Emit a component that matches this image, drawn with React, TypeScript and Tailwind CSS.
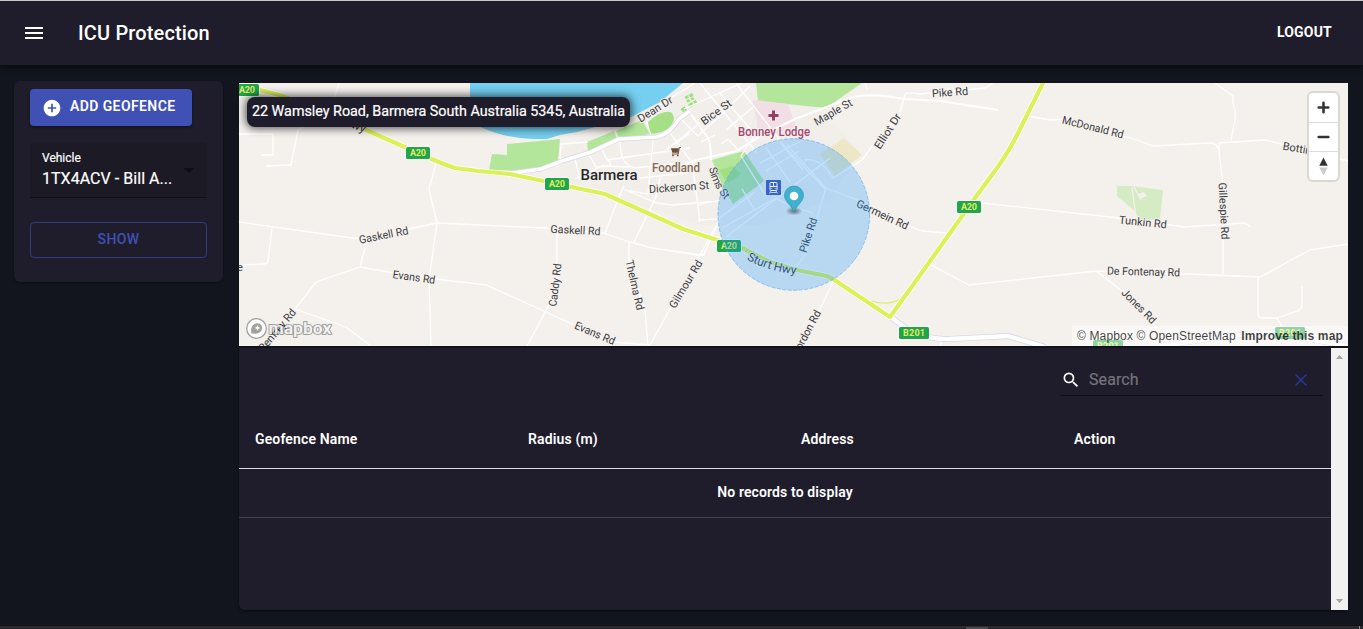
import type { ReactNode } from "react";
import { MdMenu, MdAddCircle, MdSearch, MdArrowDropDown } from "react-icons/md";

type Label = {
  text: string;
  x: number;
  y: number;
  turn?: number;
  len: number;
  size?: number;
  color?: string;
  weight?: number;
};

const LABELS: Label[] = [
  { text: "Gaskell Rd", x: 383.5, y: 235, turn: -11, len: 50 },
  { text: "Evans Rd", x: 414, y: 277, turn: 8, len: 43 },
  { text: "Penfrey Rd", x: 277, y: 330, turn: -50, len: 52 },
  { text: "Gaskell Rd", x: 575.5, y: 230, turn: 3, len: 50 },
  { text: "Caddy Rd", x: 555, y: 285, turn: -83, len: 43 },
  { text: "Thelma Rd", x: 635, y: 285, turn: 77, len: 51 },
  { text: "Evans Rd", x: 595, y: 333, turn: 23, len: 43 },
  { text: "Gilmour Rd", x: 685.5, y: 284, turn: -59, len: 54 },
  { text: "Dean Dr", x: 655, y: 109, turn: -32, len: 39 },
  { text: "Foodland", x: 676, y: 168, len: 48, size: 12, color: "#86695a", weight: 500 },
  { text: "Barmera", x: 609, y: 175, len: 57, size: 15, color: "#26262b", weight: 500 },
  { text: "Dickerson St", x: 679, y: 187, turn: -4, len: 60 },
  { text: "Bice St", x: 716, y: 112, turn: -36, len: 35 },
  { text: "Maple St", x: 833, y: 112, turn: -30, len: 42 },
  { text: "Elliot Dr", x: 887.5, y: 131, turn: -57, len: 40 },
  { text: "Bonney Lodge", x: 774, y: 132, len: 72, size: 12, color: "#a5476f", weight: 500 },
  { text: "Pike Rd", x: 950, y: 92, turn: -4, len: 36 },
  { text: "Germein Rd", x: 882.5, y: 214.5, turn: 25, len: 56 },
  { text: "Gordon Rd", x: 806, y: 333, turn: -62, len: 50 },
  { text: "McDonald Rd", x: 1093, y: 127, turn: 14, len: 63 },
  { text: "Tunkin Rd", x: 1143, y: 222, turn: 6, len: 48 },
  { text: "De Fontenay Rd", x: 1143.5, y: 271.5, turn: 1.5, len: 73 },
  { text: "Jones Rd", x: 1139, y: 306, turn: 45, len: 44 },
  { text: "Gillespie Rd", x: 1224, y: 211, turn: 87, len: 57 },
  { text: "Botting Rd", x: 1308, y: 150, turn: 10, len: 51 },
  { text: "Pike Rd", x: 808, y: 235, turn: -72, len: 36 },
];

const MINOR_ROADS = [
  // west
  "M339 83 L330 112 L298 130 L291 165 L266 166",
  "M239 134 H273 V155 H261",
  "M239 222 L360 239 L437 223 L545 228 L603 233 L630 242 L652 248 L700 255 L705 254",
  "M272 227 L268 262 Q267 264 263 264 L239 265",
  "M436 164 L429 189 L437 223 L429 279 L431 346",
  "M367 240 L360 267 L316 282 L295 309 L346 327 L371 346",
  "M360 267 L410 276 L486 285 L546 312 L612 342 L650 345 L720 219",
  "M557 230 V290 L527 346",
  "M629 242 V262 L645 310 L648 346",
  "M621 192 L605 233",
  "M657 195 L634 242",
  "M295 309 L262 346",
  // town
  "M560 161 L561 144 L588 142 M575 159 L580 179 M588 153 L596 167 L611 166 L608 158 M602 149 L607 160 L690 148 M620 142 Q620 165 635 168 L681 163",
  "M653 140 L648 194 L625 190 L657 203 L672 205 L720 201 M624 186 L618 200",
  "M575 179 L602 166 L630 167 M640 178 L688 173 M660 178 L655 200",
  "M646 121 L651 135 M670 133 L690 160 M666 150 L700 123",
  "M674 145 L690 133 M682 120 L698 136 L724 112 L750 86 M700 83 L757 153",
  "M719 92 L757 137 M736 83 L785 147 L826 190 M752 108 L726 130",
  "M640 117 L695 83 M684 109 L742 83",
  "M701 142 L715 135 M721 144 L728 139 L738 150",
  "M692 160 L700 222 M697 206 L708 202 M698 220 L718 219 L755 192",
  "M758 130 L741 156 L766 196 M766 148 L790 182 M780 142 L803 170 M760 163 L806 138 M766 171 L799 151",
  "M742 189 L754 209 M722 228 L776 198 L788 205 L813 213 M726 237 L830 158",
  "M787 145 L826 188 L806 253 M806 253 L794 270 M804 160 Q815 158 826 168 L833 178 L862 160 L876 141",
  "M826 188 L860 201 L906 225 L922 231 L946 233",
  "M680 252 L703 256 L717 225",
  "M834 280 L818 313 L800 346",
  // east
  "M876 142 L899 116 L905 94 Q907 92 920 94 L965 90 L985 88 L993 83 M865 83 L867 89",
  "M1028 116 L1050 120 L1068 119 L1140 141 L1153 146 L1210 143 Q1217 143 1219 150 L1223 185 L1223 274",
  "M1215 83 L1233 96 Q1232 102 1235 110 L1235 120 L1231 140",
  "M1219 150 V143 L1265 140 L1348 161",
  "M982 203 L1110 217 L1185 227 L1243 223 Q1249 224 1250 227",
  "M931 265 L969 285 L1096 271 L1190 274 L1260 277 L1310 250 L1348 244",
  "M1096 271 L1130 297 L1162 335",
  "M1258 277 V313 Q1258 318 1262 318 H1277 L1297 311 Q1302 310 1302 304 V286 M1277 318 L1285 332 L1340 346",
  "M940 346 L944 335",
];

const TOWN_STREETS =
  "M690 113 L708 138 Q711 146 711 160 M680 166 L696 160 L737 151 L757 138 L795 119 L850 98 Q868 92 905 99 L940 101 L998 110";

const SCENIC =
  "M505 174 L541 169 L562 161 L591 152 L619 139 L657 137 Q667 134 673 127 L680 118 L690 111";

const SOUTH_ROAD =
  "M891 317 L908 330 Q930 340 950 339 L1008 336 L1045 347 M1160 346 L1230 336 L1270 332 L1348 346";

const HIGHWAY =
  "M239 86 L260 90 L283 96 L366 130 L425 156 Q445 165 455 168 L478 171 L510 174 L605 194 L683 229 L742 248 L770 262 L797 270 L827 276 L833 279 L890 317 L928 264 L975 198 L997 168 Q1010 150 1018 133 L1043 83 L1048 74";

const SHIELDS = [
  { text: "A20", x: 247, y: 90 },
  { text: "A20", x: 418, y: 153 },
  { text: "A20", x: 557, y: 184 },
  { text: "A20", x: 729, y: 246 },
  { text: "A20", x: 969, y: 207 },
  { text: "B201", x: 914, y: 333 },
  { text: "B201", x: 1108, y: 346 },
  { text: "B201", x: 1290, y: 333 },
];

function RoadLabel({ text, x, y, turn = 0, len, size = 11, color = "#3c3c41", weight = 400 }: Label) {
  return (
    <text
      transform={`translate(${x} ${y}) rotate(${turn})`}
      textAnchor="middle"
      dy="0.36em"
      textLength={len}
      lengthAdjust="spacingAndGlyphs"
      fontSize={size}
      fontWeight={weight}
      fill={color}
      stroke="#f4f1ed"
      strokeWidth="2"
      strokeLinejoin="round"
      paintOrder="stroke"
    >
      {text}
    </text>
  );
}

function Shield({ text, x, y }: { text: string; x: number; y: number }) {
  const w = text.length === 4 ? 30 : 24;
  return (
    <g>
      <rect x={x - w / 2 - 0.7} y={y - 6.7} width={w + 1.4} height="13.4" rx="2.2" fill="#fff" />
      <rect x={x - w / 2} y={y - 6} width={w} height="12" rx="1.6" fill="#1fa64b" />
      <text
        x={x}
        y={y + 3.2}
        textAnchor="middle"
        textLength={w - 8}
        fontSize="9"
        fontWeight="700"
        fill="#e3e965"
      >
        {text}
      </text>
    </g>
  );
}

function MapCanvas() {
  return (
    <svg viewBox="239 83 1109 263" className="block h-[263px] w-full font-['Roboto',sans-serif]">
      <rect x="239" y="83" width="1109" height="263" fill="#f4f1ed" />
      <path d="M560 150 L610 125 L690 83 H790 L860 150 L830 200 L760 225 L700 225 L560 180Z" fill="#f2eeea" />
      <path
        d="M470 83 V110 L480 127 L493 132 Q510 138 533 139 L547 139 L560 135 L577 132 L631 117 L660 102 L683 83Z"
        fill="#75cff0"
      />
      <path d="M492 154 L507 155 V144 L560 139 L558 161 L538 171 L489 170Z" fill="#b3e59b" />
      <path d="M587 142 L614 131 L617 139 L588 151Z M616 131 L642 120 L650 134 L619 139Z" fill="#b3e59b" />
      <path d="M648 122 Q664 108 672 113 Q677 120 669 128 Q664 133 650 134Z" fill="#a5e084" />
      <path d="M756 83 H862 L826 108 L758 101Z" fill="#b3e59b" />
      <path d="M712 160 L744 151 L764 181 L733 204 L722 185Z" fill="#b3e59b" />
      <path d="M719 170 L733 166 L741 174 L728 183Z" fill="#9fdf7f" />
      <g fill="#9fdf7f">
        <path d="M684.500 97 l3-2 l1.500 2.500 l-3 1.800z M688.500 95 l3.500-2 l1.500 3 l-3 1.500z M686 100.500 l3-1.500 l1.500 2.500 l-3 1z M690.500 98.500 l2.500-1.500 l1.500 2 l-2.500 1.500z" />
        <path d="M688 104.500 l4-2.500 l2 3 l-3.500 2.500z M693 101.500 l2.500-1.500 l2 2.500 l-2.500 2z" />
        <path d="M680.500 109 l4-2.800 l2.500 3.500 l-4 2.500z" />
      </g>
      <path d="M752 101 L757 100 L788 104 L796 126 L783 134 H757 V120Z" fill="#f2dfe5" />
      <path d="M820 154 L844 138 L862 155 L835 176Z" fill="#eee7c5" />
      <path d="M1117 186 H1131 L1163 190 L1160 221 L1138 218 L1135 211 L1117 196Z" fill="#d4ebc4" />
      <path d="M1132 187 L1136 218 M1134 187 L1141 200" stroke="#f4f1ed" strokeWidth="1.3" fill="none" />
      <path d="M1138 194 l6-2 l3 4 l-7 3z" fill="#f4f1ed" />

      <g fill="none" stroke="#fff" strokeWidth="1.3" strokeLinejoin="round">
        {MINOR_ROADS.map((d) => (
          <path key={d} d={d} />
        ))}
        <path d={TOWN_STREETS} strokeWidth="2.1" />
      </g>

      <g fill="none" strokeLinejoin="round">
        <path d={SCENIC} stroke="#d5d8e8" strokeWidth="5" />
        <path d={SCENIC} stroke="#fff" strokeWidth="3.6" />
        <path d={SOUTH_ROAD} stroke="#d5d8e8" strokeWidth="6" />
        <path d={SOUTH_ROAD} stroke="#fff" strokeWidth="4.4" />
        <path d="M871 301 Q888 306 900 299" stroke="#dcef5d" strokeWidth="1.2" />
        <path d={HIGHWAY} stroke="#fff" strokeWidth="5.6" />
        <path d={HIGHWAY} stroke="#dbf059" strokeWidth="4.2" />
      </g>

      {/* shop */}
      <path d="M671 148.300 H679 L678.200 152.800 H672.300Z" fill="#6b4f3e" />
      <path d="M681 147.500 H679.400 L678.200 154 H672" fill="none" stroke="#6b4f3e" strokeWidth="0.9" />
      <circle cx="673" cy="155.400" r="0.9" fill="#6b4f3e" />
      <circle cx="677.800" cy="155.400" r="0.9" fill="#6b4f3e" />
      {/* hospital */}
      <path d="M773.500 110.500 V120.500 M768.500 115.500 H778.500" stroke="#fff" strokeWidth="5" opacity="0.7" />
      <path d="M773.500 110.500 V120.500 M768.500 115.500 H778.500" stroke="#963f63" strokeWidth="3" />

      {LABELS.map((l) => (
        <RoadLabel key={`${l.text}${l.x}`} {...l} />
      ))}

      <path id="sims" d="M709 168 Q712 186 727 202" fill="none" />
      <text fontSize="11" fill="#3c3c41" stroke="#f4f1ed" strokeWidth="1" paintOrder="stroke">
        <textPath href="#sims" textLength="36">
          Sims St
        </textPath>
      </text>
      <path id="sturt" d="M746.500 259.500 Q768 271 797 274.500" fill="none" />
      <text fontSize="12" fill="#3c3c41" stroke="#f4f1ed" strokeWidth="1.2" paintOrder="stroke">
        <textPath href="#sturt" textLength="52">
          Sturt Hwy
        </textPath>
      </text>
      <text
        transform="translate(364 133) rotate(23)"
        textAnchor="end"
        fontSize="12"
        fill="#3c3c41"
        stroke="#f4f1ed"
        strokeWidth="1.5"
        paintOrder="stroke"
      >
        Sturt Hwy
      </text>
      <text x="237" y="270.500" fontSize="11" fill="#3c3c41">
        e
      </text>

      {SHIELDS.map((s) => (
        <Shield key={`${s.text}${s.x}`} {...s} />
      ))}

      {/* geofence radius */}
      <circle
        cx="793.8"
        cy="214.5"
        r="75.8"
        fill="#1e96ff"
        fillOpacity="0.28"
        stroke="#4fa4f0"
        strokeOpacity="0.6"
        strokeWidth="1"
        strokeDasharray="4 1.5"
      />

      {/* station */}
      <rect x="766" y="180" width="15" height="15" rx="0.8" fill="#3664c6" />
      <g stroke="#e6effb" strokeWidth="1" fill="none">
        <rect x="770" y="182.5" width="7" height="8" rx="0.8" />
        <path d="M770 186.500 H777 M773.500 182.500 V186.500" />
        <path d="M771.300 188.500 h1 M774.700 188.500 h1" strokeWidth="0.8" />
        <path d="M771 191 L769.500 193.500 M776 191 L777.500 193.500 M770.500 192.500 H776.500" strokeWidth="0.8" />
      </g>

      {/* marker */}
      <defs>
        <radialGradient id="shade">
          <stop offset="0" stopColor="#333" stopOpacity="0.65" />
          <stop offset="1" stopColor="#333" stopOpacity="0" />
        </radialGradient>
      </defs>
      <ellipse cx="794" cy="211" rx="8.5" ry="4.5" fill="url(#shade)" />
      <path
        d="M794 212 C793 207 784.500 201.500 784.500 195.500 A9.500 9.500 0 0 1 803.500 195.500 C803.500 201.500 795 207 794 212Z"
        fill="#3fb1ce"
        stroke="#3798b1"
        strokeWidth="0.8"
      />
      <circle cx="794" cy="196" r="4.3" fill="#fff" />

      {/* logo */}
      <circle cx="256.5" cy="328.5" r="9.8" fill="#fff" stroke="#a3a19e" strokeWidth="1.3" />
      <path
        d="M251.500 333.500 C250.500 329 251.500 325.500 254.500 323.900 C257 322.700 260 323.200 261.400 325.500 C262.700 328 262 331 259.500 332.400 C257 333.700 254 333.800 251.500 333.500Z"
        fill="#a3a19e"
      />
      <path d="M257.500 325 l0.900 2 l2 0.900 l-2 0.900 l-0.900 2 l-0.900-2 l-2-0.900 l2-0.900z" fill="#fff" />
      <text
        x="268.5"
        y="333.5"
        textLength="63"
        lengthAdjust="spacingAndGlyphs"
        fontSize="17"
        fontWeight="700"
        fill="#fff"
        stroke="#000"
        strokeOpacity="0.35"
        strokeWidth="2"
        strokeLinejoin="round"
        paintOrder="stroke"
        fillOpacity="0.85"
      >
        mapbox
      </text>
    </svg>
  );
}

function MapButton({ children, last = false }: { children: ReactNode; last?: boolean }) {
  return (
    <button
      className={
        last
          ? "flex h-[28px] w-[29px] items-center justify-center"
          : "flex h-[29.5px] w-[29px] items-center justify-center border-b border-[#ddd]"
      }
    >
      {children}
    </button>
  );
}

function MapPanel() {
  return (
    <section className="relative h-[263px] overflow-hidden">
      <MapCanvas />
      <div className="absolute left-2 top-3.5 flex h-[30px] w-[383px] items-center whitespace-nowrap rounded-[8px] bg-[#1f1d2b] px-[5px] text-[14.35px] tracking-[-0.02px] text-white shadow-[0_0_9px_2px_rgba(0,0,0,0.6)] [-webkit-text-stroke:0.2px_white]">
        22 Wamsley Road, Barmera South Australia 5345, Australia
      </div>
      <div className="absolute right-2 top-2 flex w-[33px] flex-col rounded-[6px] border-2 border-[#dbd8d4] bg-white">
        <MapButton>
          <svg width="29" height="29" viewBox="0 0 29 29">
            <path d="M14.500 9.700 V19.300 M9.700 14.500 H19.300" stroke="#333" strokeWidth="2.6" strokeLinecap="round" />
          </svg>
        </MapButton>
        <MapButton>
          <svg width="29" height="29" viewBox="0 0 29 29">
            <path d="M9.700 15 H19.300" stroke="#333" strokeWidth="2.6" strokeLinecap="round" />
          </svg>
        </MapButton>
        <MapButton last>
          <svg width="29" height="29" viewBox="0 0 29 29">
            <path d="M10.300 13.700 L14.500 5.500 L18.700 13.700Z" fill="#333" />
            <path d="M10.300 15.500 L14.500 23.500 L18.700 15.500Z" fill="#ccc" />
          </svg>
        </MapButton>
      </div>
      <div className="absolute bottom-0 right-0 flex h-5 w-[276px] items-center justify-between whitespace-nowrap bg-white/50 px-[5px] font-['Liberation_Sans',sans-serif] text-[12px] tracking-[0.15px] text-black/75">
        <span>© Mapbox</span>
        <span className="-ml-0.5">© OpenStreetMap</span>
        <span className="font-bold">Improve this map</span>
      </div>
    </section>
  );
}

function Sidebar() {
  return (
    <aside className="flex h-[201px] w-[209px] flex-col rounded-md bg-[#1f1d2b] px-4 pt-2 shadow-[0_1px_2px_rgba(0,0,0,0.4)]">
      <button className="flex h-[37px] w-[162px] items-center rounded bg-[#3f51b5] pl-3 text-[14px] font-semibold tracking-[0.4px] text-white shadow-[0_2px_3px_rgba(0,0,0,0.35)]">
        <MdAddCircle className="mr-2 size-5" />
        <span className="pb-0.5">ADD GEOFENCE</span>
      </button>
      <div className="mt-4 flex h-14 items-end rounded-t border-b border-[#100f16] bg-[#1c1a25] pb-[6px] pl-3 pr-1.5 text-white">
        <div className="flex flex-1 flex-col">
          <span className="text-[12px] leading-[18px] [-webkit-text-stroke:0.2px_white]">Vehicle</span>
          <span className="text-[16px] leading-6 tracking-[0.04px] [-webkit-text-stroke:0.2px_white]">
            1TX4ACV - Bill A...
          </span>
        </div>
        <MdArrowDropDown className="mb-[9px] size-6 shrink-0 text-[#0e0d13]" />
      </div>
      <button className="mt-6 h-[36px] rounded border border-[#303c80] pb-0.5 text-[14px] font-medium tracking-[0.4px] text-[#3f51b5]">
        SHOW
      </button>
    </aside>
  );
}

function GeofenceTable() {
  return (
    <section className="flex h-[262px] rounded-b-md shadow-[0_1px_3px_rgba(0,0,0,0.6)]">
      <div className="flex flex-1 flex-col rounded-bl-md bg-[#1f1d2b] text-[14px] text-white">
        <div className="flex h-[62px] items-start justify-end pr-2 pt-4">
          <div className="flex h-8 w-[263px] items-center border-b border-[#100f16]">
            <MdSearch className="ml-px size-5" />
            <span className="ml-2 flex-1 text-[16px] tracking-[0.1px] text-[#75737b] [-webkit-text-stroke:0.2px_#75737b]">
              Search
            </span>
            <svg className="mr-4" width="12" height="12" viewBox="0 0 12 12">
              <path
                d="M0.500 0.500 L11.500 11.500 M11.500 0.500 L0.500 11.500"
                stroke="#27379b"
                strokeWidth="1.5"
              />
            </svg>
          </div>
        </div>
        <div className="grid h-[59px] grid-cols-4 items-center border-b border-[#e0e0e0] font-semibold tracking-[0.14px]">
          <span className="pl-4">Geofence Name</span>
          <span className="pl-4">Radius (m)</span>
          <span className="pl-4">Address</span>
          <span className="pl-4">Action</span>
        </div>
        <div className="flex h-[49px] items-center justify-center border-b border-[#414045] pb-0.5 font-semibold tracking-[0.12px]">
          No records to display
        </div>
      </div>
      <div className="flex w-[17px] flex-col items-center justify-between bg-[#f1f1f1] py-[7px]">
        <svg width="7" height="4" viewBox="0 0 7 4">
          <path d="M0 4 L3.500 0 L7 4Z" fill="#a3a3a3" />
        </svg>
        <svg width="7" height="4" viewBox="0 0 7 4">
          <path d="M0 0 L3.500 4 L7 0Z" fill="#a3a3a3" />
        </svg>
      </div>
    </section>
  );
}

export default function App() {
  return (
    <div className="flex h-[629px] w-[1363px] flex-col overflow-hidden bg-[#12151d] font-['Roboto',sans-serif]">
      <header className="flex h-[65px] shrink-0 items-center border-t border-[#c9cbcb] bg-[#1f1d2b] pl-[22px] pr-[31px] text-white shadow-[0_2px_5px_rgba(0,0,0,0.5)]">
        <MdMenu className="size-6" />
        <h1 className="ml-8 flex-1 text-[20px] font-medium tracking-[0.15px]">ICU Protection</h1>
        <span className="pb-0.5 text-[14px] font-bold tracking-[0.2px]">LOGOUT</span>
      </header>
      <main className="flex flex-1 gap-4 pl-3.5 pr-[15px] pt-4">
        <Sidebar />
        <div className="flex flex-1 flex-col gap-0.5 pt-0.5">
          <MapPanel />
          <GeofenceTable />
        </div>
      </main>
      <footer className="flex h-[3px] shrink-0 bg-[#2b2a2c]">
        <div className="ml-[966px] mt-px h-0.5 w-[22px] bg-[#4b4a4c]" />
        <div className="ml-[371px] w-px bg-[#8a8a8a]" />
      </footer>
    </div>
  );
}
